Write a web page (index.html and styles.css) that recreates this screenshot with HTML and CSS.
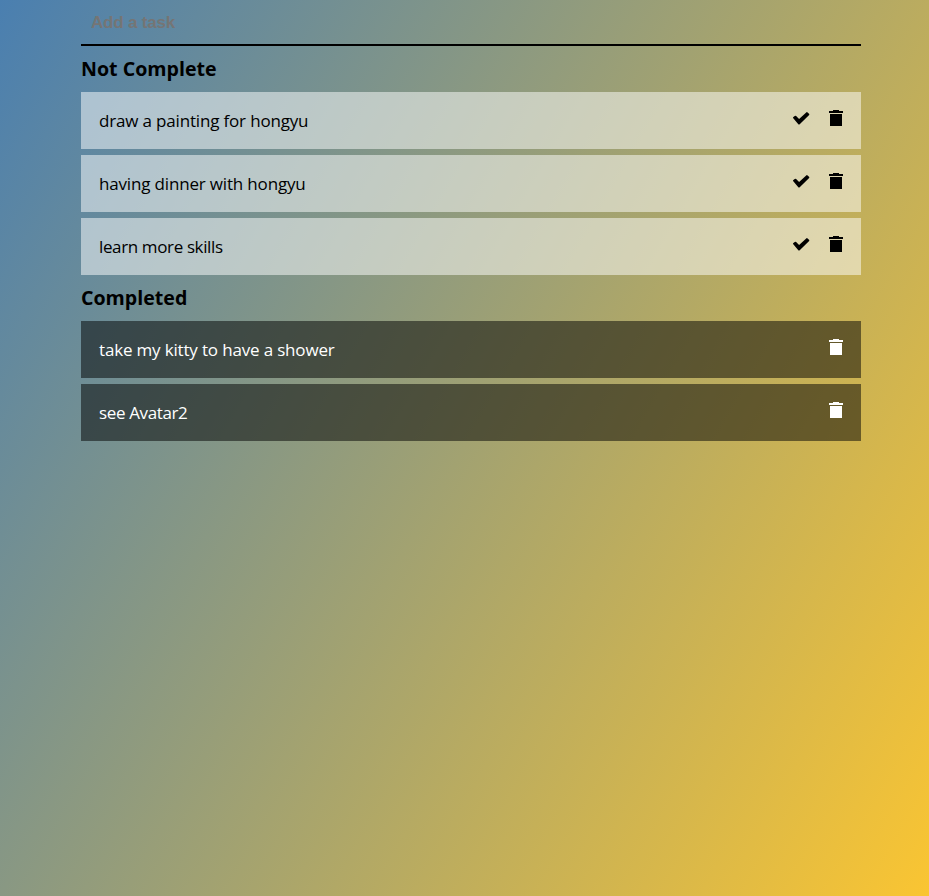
FILE: index.html
```html
<!DOCTYPE html>
<html lang="en">
<head>
<meta charset="utf-8">
<title>Tasks</title>
<link rel="stylesheet" href="styles.css">
</head>
<body>
<svg class="sprite" aria-hidden="true">
  <symbol id="check" viewBox="0 0 17 13"><path d="M.3 6.2Q-.3 5.6.4 5L1.8 3.9Q2.5 3.4 3.1 4L6.1 7 13.2.4Q13.9-.2 14.6.4L16 1.8Q16.6 2.5 15.9 3.2L6.7 12.2Q6 12.8 5.3 12.2Z"/></symbol>
  <symbol id="trash" viewBox="0 0 14 16"><path d="M0 1h4V0h6v1h4v2H0ZM1 4h12v12H1Z"/></symbol>
</svg>
<main class="container">
  <input class="task-input" type="text" placeholder="Add a task">
  <section>
    <h3 class="title">Not Complete</h3>
    <ul class="list">
      <li class="task"><span class="snug">draw a painting for hongyu</span><svg class="check"><use href="#check"/></svg><svg class="trash"><use href="#trash"/></svg></li>
      <li class="task"><span class="snug">having dinner with hongyu</span><svg class="check"><use href="#check"/></svg><svg class="trash"><use href="#trash"/></svg></li>
      <li class="task"><span class="tight">learn more skills</span><svg class="check"><use href="#check"/></svg><svg class="trash"><use href="#trash"/></svg></li>
    </ul>
  </section>
  <section>
    <h3 class="title">Completed</h3>
    <ul class="list">
      <li class="task done"><span class="snug">take my kitty to have a shower</span><svg class="trash"><use href="#trash"/></svg></li>
      <li class="task done"><span class="tight">see Avatar2</span><svg class="trash"><use href="#trash"/></svg></li>
    </ul>
  </section>
</main>
</body>
</html>
```
FILE: styles.css
```css
* { box-sizing: border-box; margin: 0; padding: 0; }
body {
  min-height: 100vh;
  font-family: "Open Sans", "Noto Sans", sans-serif;
  background: linear-gradient(120deg, #4a7fb0, #fac532);
}
.sprite { display: none; }
.container { width: 780px; margin-left: 81px; }
.task-input {
  display: block;
  width: 100%;
  height: 46px;
  padding: 2px 10px 0;
  border: 0;
  border-bottom: 2px solid #000;
  background: none;
  outline: none;
  font: bold 17px "Liberation Sans", sans-serif;
  letter-spacing: -.2px;
}
.task-input::placeholder { color: #757575; }
.title { height: 46px; font-size: 19.6px; line-height: 46px; }
.list { list-style: none; display: grid; gap: 6px; }
.task {
  display: flex;
  height: 57px;
  padding: 0 18px;
  background: rgba(255, 255, 255, .5);
  font-size: 17px;
  line-height: 57px;
}
.task span { flex: 1; white-space: nowrap; }
.snug { letter-spacing: -.17px; }
.tight { letter-spacing: -.37px; }
.done { background: rgba(0, 0, 0, .5); color: #fff; }
.check { width: 17px; height: 13px; margin: 20px 19px 0 0; }
.trash { width: 14px; height: 16px; margin-top: 18px; fill: currentColor; }
```
